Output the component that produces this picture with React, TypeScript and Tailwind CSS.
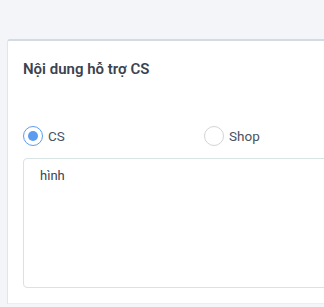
import React from 'react';

const App: React.FC = () => {
  return (
    <div className="h-[307px] w-[324px] overflow-hidden bg-[#f4f5f8] pt-[39px] pl-[7px] font-['Roboto',sans-serif]">
      <div className="w-[420px] rounded-tl-[3px] border-t-2 border-l border-[#d4dce3] border-l-[#e2e6ea] bg-white">
        <div className="px-[15px] pt-[18px] pb-[47px]">
          <h2 className="text-[15px] leading-5 font-semibold text-[#3b4350]">Nội dung hỗ trợ CS</h2>
        </div>
        <div className="px-[15px]">
          <div className="grid grid-cols-[181px_1fr] items-center">
            <label className="flex items-center gap-[5px]">
              <span className="flex h-[20px] w-[20px] items-center justify-center rounded-full border border-[#5d9cef]">
                <span className="h-[10px] w-[10px] rounded-full bg-[#5b9bf0]" />
              </span>
              <span className="text-[13.5px] leading-5 text-[#4a5260]">CS</span>
            </label>
            <label className="flex items-center gap-[5px]">
              <span className="h-[20px] w-[20px] rounded-full border border-[#d2d4d7]" />
              <span className="text-[13.5px] leading-5 text-[#4a5260]">Shop</span>
            </label>
          </div>
          <div className="mt-[12px] h-[130px] rounded-[4px] border border-[#d8e3e4] px-[16px] pt-[7px] text-[13px] leading-5 text-[#3b4350]">
            hình
          </div>
        </div>
        <div className="mt-[15px] border-t border-[#eceef1]" />
      </div>
    </div>
  );
};

export default App;
